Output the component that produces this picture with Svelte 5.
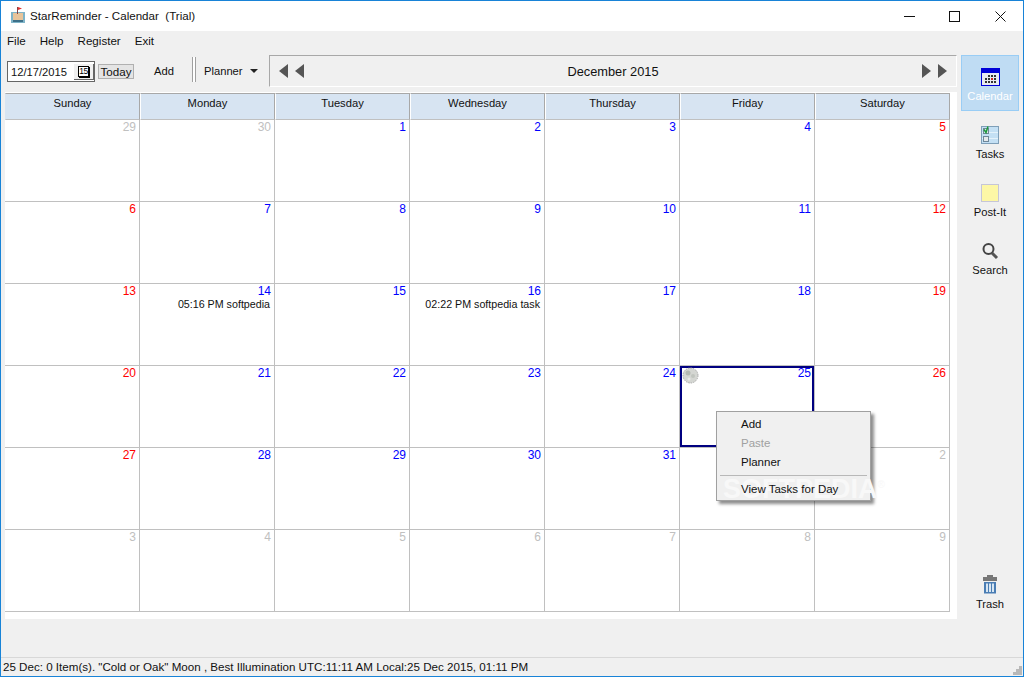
<script>
    const weekdays = ['Sunday', 'Monday', 'Tuesday', 'Wednesday', 'Thursday', 'Friday', 'Saturday'];
    const menus = ['File', 'Help', 'Register', 'Exit'];

    // November tail, all of December, January head
    const days = [];
    for (const d of [29, 30]) days.push({ day: d, muted: true });
    for (let d = 1; d <= 31; d++) days.push({ day: d });
    for (let d = 1; d <= 9; d++) days.push({ day: d, muted: true });

    const events = {
        14: '05:16 PM softpedia',
        16: '02:22 PM softpedia task'
    };
</script>

<div class="window">
    <div class="titlebar">
        <svg class="app-icon" width="14" height="16" viewBox="0 0 14 16">
            <rect x="0" y="5" width="14" height="11" fill="#7fb4c8" />
            <rect x="2" y="6" width="10" height="7" fill="#e8c49a" />
            <rect x="2" y="13" width="10" height="2" fill="#3d6f88" />
            <rect x="6" y="0" width="1" height="7" fill="#884444" />
            <path d="M7 0l4 1.5-4 1.5z" fill="#e03030" />
        </svg>
        <span class="title">StarReminder - Calendar&nbsp; (Trial)</span>
        <div class="controls">
            <svg width="11" height="11" viewBox="0 0 11 11"><path d="M0 5.5h11" stroke="#111" fill="none" /></svg>
            <svg class="ctl-max" width="11" height="11" viewBox="0 0 11 11"><rect x="0.5" y="0.5" width="10" height="10" stroke="#111" fill="none" /></svg>
            <svg width="11" height="11" viewBox="0 0 11 11"><path d="M0.5 0.5l10 10M10.5 0.5l-10 10" stroke="#111" fill="none" /></svg>
        </div>
    </div>

    <div class="menubar">
        {#each menus as m}
            <span>{m}</span>
        {/each}
    </div>

    <div class="main">
        <div class="content">
            <div class="toolbar">
                <div class="datebox">
                    <span>12/17/2015</span>
                    <span class="datebtn"><span class="cal15">15</span></span>
                </div>
                <div class="today">Today</div>
                <div class="add">Add</div>
                <div class="grip"></div>
                <div class="planner">Planner <i class="caret"></i></div>
                <div class="nav">
                    <div class="arrows">
                        <i class="tri left"></i><i class="tri left"></i>
                    </div>
                    <div class="month">December 2015</div>
                    <div class="arrows">
                        <i class="tri right"></i><i class="tri right"></i>
                    </div>
                </div>
            </div>

            <div class="calendar">
                <div class="grid">
                    {#each weekdays as w}
                        <div class="head">{w}</div>
                    {/each}
                    {#each days as d, i}
                        <div class="cell" class:selected={!d.muted && d.day === 25}>
                            <div
                                class="num"
                                class:muted={d.muted}
                                class:weekend={!d.muted && (i % 7 === 0 || i % 7 === 6)}
                            >{d.day}</div>
                            {#if !d.muted && events[d.day]}
                                <div class="event">{events[d.day]}</div>
                            {/if}
                            {#if !d.muted && d.day === 25}
                                <svg class="moon" width="17" height="17" viewBox="0 0 17 17">
                                    <circle cx="8.5" cy="8.5" r="7.5" fill="#d4d6d2" stroke="#a8a8a8" stroke-dasharray="1.5 1" />
                                    <circle cx="6" cy="6" r="2.5" fill="#b4b8b2" />
                                    <circle cx="11" cy="9" r="2" fill="#c0c4be" />
                                    <circle cx="7" cy="12" r="1.5" fill="#e8e8e6" />
                                </svg>
                            {/if}
                        </div>
                    {/each}
                </div>
            </div>
        </div>

        <div class="sidebar">
            <div class="tool active">
                <svg width="19" height="18" viewBox="0 0 19 18">
                    <rect width="19" height="18" fill="#0000d8" />
                    <rect x="1" y="5" width="17" height="12" fill="#e8eaf0" />
                    <path d="M7 7h2v2H7zM10 7h2v2h-2zM13 7h2v2h-2zM4 10h2v2H4zM7 10h2v2H7zM13 10h2v2h-2zM4 13h2v2H4zM7 13h2v2H7zM10 13h2v2h-2zM13 13h2v2h-2z" fill="#333" />
                    <rect x="10" y="10" width="2" height="2" fill="#d02020" />
                </svg>
                <span>Calendar</span>
            </div>
            <div class="tool">
                <svg width="18" height="18" viewBox="0 0 18 18">
                    <rect x="0.5" y="0.5" width="17" height="17" fill="#c4e0f4" stroke="#7f9fb8" />
                    <path d="M1 6.5h16M1 12.5h16" stroke="#e4f2fb" />
                    <rect x="2.5" y="2.5" width="5" height="5" fill="#dfe6ea" stroke="#6f8798" />
                    <rect x="2.5" y="10.5" width="5" height="5" fill="#e6e9ec" stroke="#6f8798" />
                    <path d="M3 3.5l2 3 2-6" stroke="#1c9a3c" stroke-width="1.5" fill="none" />
                </svg>
                <span>Tasks</span>
            </div>
            <div class="tool">
                <svg width="18" height="18" viewBox="0 0 18 18">
                    <rect x="0.5" y="0.5" width="17" height="17" fill="#fdf7a6" stroke="#c6c6d8" />
                </svg>
                <span>Post-It</span>
            </div>
            <div class="tool">
                <svg width="18" height="18" viewBox="0 0 18 18">
                    <circle cx="7.5" cy="7" r="5" fill="none" stroke="#444" stroke-width="2" />
                    <path d="M11 11l5 5" stroke="#555" stroke-width="3" />
                </svg>
                <span>Search</span>
            </div>
            <div class="tool trash">
                <svg width="16" height="19" viewBox="0 0 16 19">
                    <rect x="5" y="0" width="6" height="2" fill="#777" />
                    <rect x="1" y="2" width="14" height="4" fill="#777" />
                    <rect x="2" y="7" width="12" height="11.5" fill="#4a7db4" />
                    <path d="M4 8.5h2v8.5H4zM7 8.5h2v8.5H7zM10 8.5h2v8.5h-2z" fill="#d8e6f2" />
                </svg>
                <span>Trash</span>
            </div>
        </div>
    </div>

    <div class="statusbar">
        25 Dec: 0 Item(s). "Cold or Oak" Moon , Best Illumination UTC:11:11 AM Local:25 Dec 2015, 01:11 PM
        <svg class="sizer" width="9" height="9" viewBox="0 0 9 9">
            <path d="M6 0h3v3H6zM3 3h3v3H3zM6 3h3v3H6zM0 6h3v3H0zM3 6h3v3H3zM6 6h3v3H6z" fill="#b8b8b8" />
        </svg>
    </div>

    <div class="popup">
        <div class="watermark">SOFTPEDIA<sup>®</sup></div>
        <div class="item">Add</div>
        <div class="item disabled">Paste</div>
        <div class="item">Planner</div>
        <div class="sep"></div>
        <div class="item">View Tasks for Day</div>
    </div>
</div>

<style>
    :global(body) {
        margin: 0;
        background: #f0f0f0;
    }

    .window {
        position: relative;
        box-sizing: border-box;
        width: 1024px;
        height: 677px;
        display: flex;
        flex-direction: column;
        border: 1px solid #1883d7;
        background: #f0f0f0;
        font-family: "Liberation Sans", sans-serif;
        font-size: 12px;
        color: #111;
        overflow: hidden;
    }

    .titlebar {
        height: 30px;
        flex: none;
        box-sizing: border-box;
        display: flex;
        align-items: center;
        background: #fff;
        padding: 0 0 2px 10px;
    }

    .title {
        margin-left: 5px;
        font-size: 11.6px;
    }

    .controls {
        margin-left: auto;
        margin-right: 17px;
        display: flex;
        gap: 34px;
        padding-top: 2px;
    }

    .ctl-max {
        margin-right: 1px;
    }

    .menubar {
        height: 20px;
        flex: none;
        box-sizing: border-box;
        display: flex;
        align-items: center;
        padding: 0 0 2px 6px;
        gap: 14px;
        font-size: 11.6px;
    }

    .main {
        flex: 1;
        display: flex;
        min-height: 0;
    }

    .content {
        width: 956px;
        flex: none;
        display: flex;
        flex-direction: column;
    }

    .toolbar {
        height: 41px;
        flex: none;
        display: flex;
        align-items: flex-start;
        padding: 4px 0 0 6px;
        box-sizing: border-box;
        font-size: 11.2px;
    }

    .datebox {
        margin-top: 6px;
        width: 88px;
        height: 21px;
        box-sizing: border-box;
        border: 1px solid #666;
        background: #fff;
        display: flex;
        align-items: center;
        justify-content: space-between;
        padding-left: 3px;
    }

    .datebtn {
        width: 20px;
        height: 16px;
        box-sizing: border-box;
        border-right: 1px solid #666;
        border-bottom: 1px solid #666;
        background: #f0f0f0;
        display: flex;
        align-items: center;
        justify-content: center;
    }

    .cal15 {
        width: 11px;
        height: 11px;
        box-sizing: border-box;
        background: #fff;
        border: 1px solid #000;
        box-shadow: 1px 1px 0 #000;
        font-size: 8.5px;
        line-height: 9px;
        letter-spacing: -0.5px;
        text-align: center;
        color: #000;
        overflow: hidden;
    }

    .today {
        margin: 9px 0 0 3px;
        width: 36px;
        height: 15px;
        box-sizing: border-box;
        border: 1px solid #b0b0b0;
        background: #e4e4e4;
        text-align: center;
        line-height: 14px;
        font-size: 11.6px;
    }

    .add {
        margin: 8px 0 0 20px;
        width: 38px;
        line-height: 17px;
    }

    .grip {
        margin-top: 2px;
        width: 2px;
        height: 25px;
        border-left: 1px solid #a0a0a0;
        border-right: 1px solid #a0a0a0;
        background: #fff;
    }

    .planner {
        margin: 8px 0 0 8px;
        width: 65px;
        line-height: 17px;
        display: flex;
        align-items: center;
        justify-content: space-between;
        padding-right: 11px;
        box-sizing: border-box;
    }

    .caret {
        width: 0;
        height: 0;
        margin-top: -2px;
        border-left: 4px solid transparent;
        border-right: 4px solid transparent;
        border-top: 4px solid #222;
    }

    .nav {
        flex: 1;
        height: 32px;
        box-sizing: border-box;
        border: 1px solid #fff;
        border-top-color: #a8a8a8;
        border-left-color: #a8a8a8;
        display: flex;
        align-items: center;
        justify-content: space-between;
        padding: 0 9px;
    }

    .arrows {
        display: flex;
        gap: 7px;
    }

    .tri {
        width: 0;
        height: 0;
        border-top: 7px solid transparent;
        border-bottom: 7px solid transparent;
    }

    .tri.left {
        border-right: 9px solid #555;
    }

    .tri.right {
        border-left: 9px solid #555;
    }

    .month {
        font-size: 12.8px;
    }

    .calendar {
        flex: none;
        margin-left: 4px;
        width: 952px;
        height: 527px;
        box-sizing: border-box;
        padding-top: 1px;
        background: #fff;
    }

    .grid {
        display: grid;
        grid-template-columns: repeat(7, 135px);
        grid-template-rows: 27px repeat(6, 82px);
    }

    .head {
        box-sizing: border-box;
        background: #d7e4f2;
        border-top: 1px solid #a8a8a8;
        border-bottom: 1px solid #c0c0c0;
        border-left: 1px solid #fff;
        border-right: 1px solid #a8a8a8;
        text-align: center;
        line-height: 18px;
        font-size: 11.2px;
    }

    .head:first-child {
        border-left-color: #d7e4f2;
    }

    .cell {
        position: relative;
        box-sizing: border-box;
        border-right: 1px solid #c0c0c0;
        border-bottom: 1px solid #c0c0c0;
        padding: 0 4px 0 4px;
        text-align: right;
    }

    .cell.selected {
        box-shadow: inset 0 0 0 2px #000080;
    }

    .num {
        height: 14px;
        line-height: 14px;
        color: #0000ff;
        margin-right: -1px;
    }

    .num.weekend {
        color: #ff0000;
    }

    .num.muted {
        color: #c0c0c0;
    }

    .event {
        font-size: 10.7px;
        line-height: 13px;
        color: #111;
        white-space: nowrap;
    }

    .moon {
        position: absolute;
        left: 2px;
        top: 1px;
    }

    .sidebar {
        flex: 1;
        display: flex;
        flex-direction: column;
        padding: 4px 4px 43px 4px;
        gap: 2px;
        font-size: 11.2px;
    }

    .tool {
        height: 56px;
        flex: none;
        box-sizing: border-box;
        display: flex;
        flex-direction: column;
        align-items: center;
        padding-top: 12px;
        gap: 2px;
        border: 1px solid transparent;
    }

    .tool span {
        line-height: 16px;
    }

    .tool.active {
        background: #bfdcf3;
        border-color: #99cdf5;
    }

    .tool.active span {
        color: #fff;
    }

    .tool.trash {
        margin-top: auto;
        height: 40px;
        padding-top: 0;
    }

    .statusbar {
        position: relative;
        height: 19px;
        flex: none;
        box-sizing: border-box;
        border-top: 1px solid #d8d8d8;
        padding-left: 2px;
        line-height: 18px;
        white-space: nowrap;
        font-size: 11.6px;
    }

    .sizer {
        position: absolute;
        right: 1px;
        bottom: 1px;
    }

    .popup {
        position: absolute;
        left: 715px;
        top: 410px;
        width: 155px;
        height: 90px;
        box-sizing: border-box;
        padding-top: 3px;
        background: #f0f0f0;
        border: 1px solid #a0a0a0;
        box-shadow: 3px 3px 3px rgba(0, 0, 0, 0.45);
        font-size: 11.5px;
    }

    .item {
        position: relative;
        height: 19px;
        line-height: 18px;
        padding-left: 24px;
    }

    .item.disabled {
        color: #a0a0a0;
    }

    .sep {
        position: relative;
        height: 1px;
        margin: 3px 3px 4px;
        background: #b8b8b8;
    }

    .watermark {
        position: absolute;
        left: 6px;
        top: 57px;
        font-size: 27px;
        font-weight: bold;
        line-height: 32px;
        color: #f8f8f8;
        white-space: nowrap;
    }

    .watermark sup {
        font-size: 10px;
        font-weight: normal;
    }
</style>
